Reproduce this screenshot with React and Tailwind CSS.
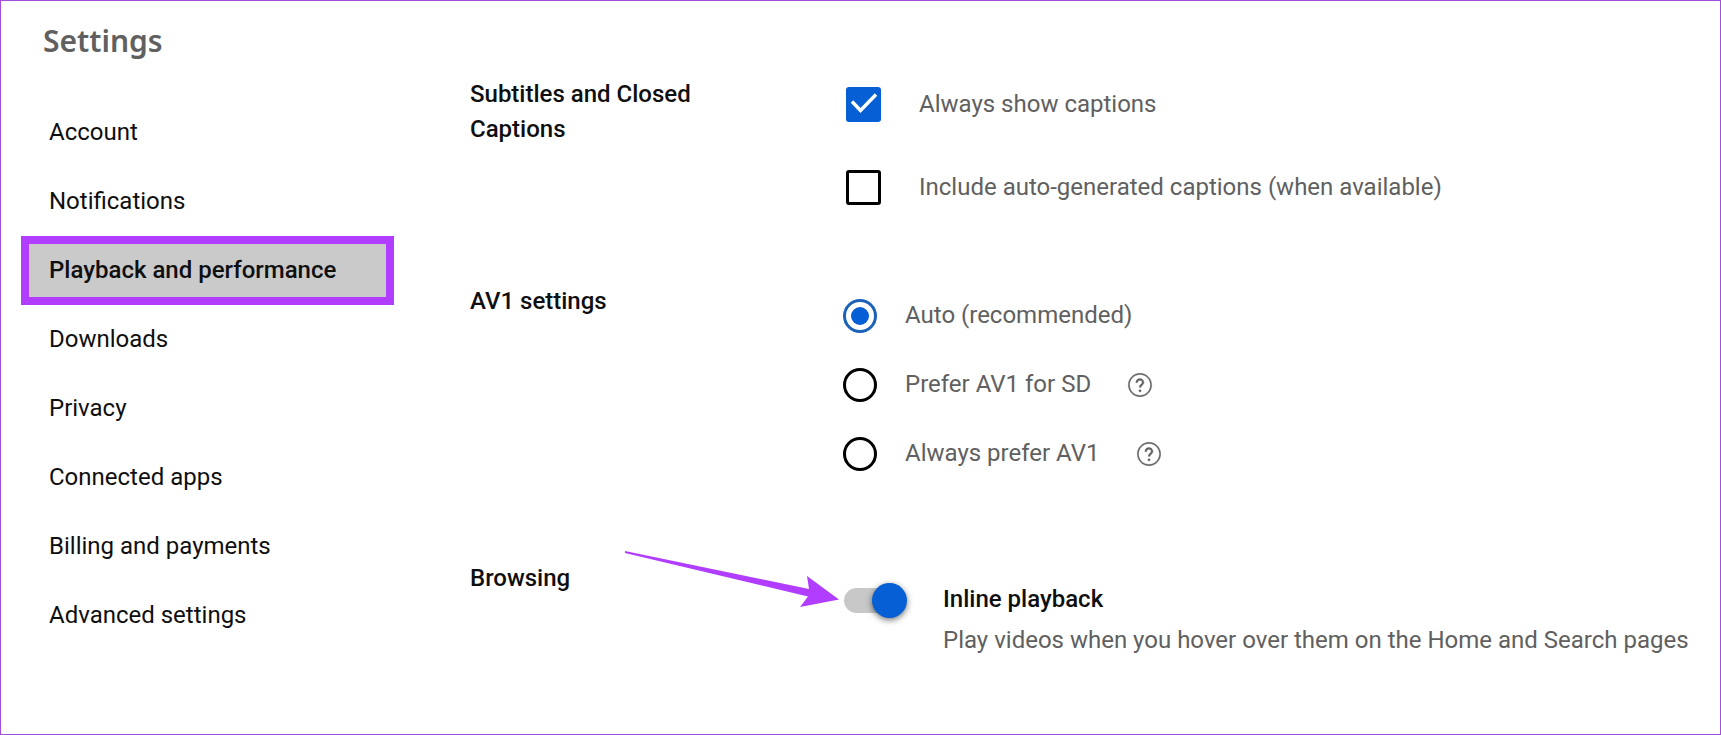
import React, { useState } from 'react';

const navItems = [
  'Account',
  'Notifications',
  'Playback and performance',
  'Downloads',
  'Privacy',
  'Connected apps',
  'Billing and payments',
  'Advanced settings',
];

const av1Options = [
  { id: 'auto', label: 'Auto (recommended)', help: false },
  { id: 'sd', label: 'Prefer AV1 for SD', help: true },
  { id: 'always', label: 'Always prefer AV1', help: true },
];

const HelpIcon = () => (
  <svg viewBox="0 0 24 24" className="h-7 w-7" fill="currentColor" stroke="currentColor" strokeWidth="0.4" aria-hidden="true">
    <path d="M15.36 9.96c0 1.09-.67 1.67-1.31 2.24-.53.47-1.03.9-1.16 1.6l-.04.2h-1.52l.04-.34c.13-1.17.93-1.86 1.57-2.42.58-.5.96-.84.96-1.28 0-1.2-.84-1.96-1.96-1.96-1.12 0-1.96.76-1.96 1.96H8.48C8.48 7.84 9.9 6.5 11.94 6.5s3.42 1.42 3.42 3.46zM12 18c.55 0 1-.45 1-1s-.45-1-1-1-1 .45-1 1 .45 1 1 1zm0-15c-4.96 0-9 4.04-9 9s4.04 9 9 9 9-4.04 9-9-4.04-9-9-9m0-1c5.52 0 10 4.48 10 10s-4.48 10-10 10S2 17.52 2 12 6.48 2 12 2z" />
  </svg>
);

const Checkbox = ({ label, checked, onChange }) => (
  <label className="flex cursor-pointer items-center gap-[38px] pl-[3px]">
    <span className="grid shrink-0">
      <input
        type="checkbox"
        checked={checked}
        onChange={onChange}
        className="col-start-1 row-start-1 h-[35px] w-[35px] cursor-pointer appearance-none rounded-[3px] border-3 border-black checked:border-[#065fd4] checked:bg-[#065fd4]"
      />
      {checked && (
        <svg viewBox="0 0 35 35" className="pointer-events-none col-start-1 row-start-1 h-[35px] w-[35px]" fill="none" stroke="white" strokeWidth="3.4">
          <path d="M6 14.5 L14.5 23.5 L30 7.5" />
        </svg>
      )}
    </span>
    <span>{label}</span>
  </label>
);

const Section = ({ title, children, className }) => (
  <section className={`grid grid-cols-[240px_1fr] gap-x-[133px] ${className}`}>
    <h2 className="font-medium text-[#0f0f0f]">{title}</h2>
    {children}
  </section>
);

const App = () => {
  const [always, setAlways] = useState(true);
  const [auto, setAuto] = useState(false);
  const [av1, setAv1] = useState('auto');
  const [inline, setInline] = useState(true);

  return (
    <div className="flex min-h-screen border border-[#a34fdc] bg-white font-[Roboto,sans-serif] text-2xl leading-[35px] text-[#606060]">
      <aside className="ml-5 w-[373px] shrink-0 pt-5">
        <h1 className="mb-[38px] pl-[22px] font-['Noto_Sans',sans-serif] text-[30px] font-semibold leading-[39px]">
          Settings
        </h1>
        <nav>
          {navItems.map((item) => (
            <a
              key={item}
              href="#"
              className={
                item === 'Playback and performance'
                  ? 'flex h-[69px] items-center border-8 border-[#b03dff] bg-[#cacaca] pl-5 font-medium text-[#0f0f0f]'
                  : 'flex h-[69px] items-center pl-7 text-[#0f0f0f]'
              }
            >
              {item}
            </a>
          ))}
        </nav>
      </aside>

      <main className="ml-[76px] flex-1 pt-[76px]">
        <Section title="Subtitles and Closed Captions" className="pb-[79px]">
          <div className="flex flex-col gap-12 pt-[10px]">
            <Checkbox label="Always show captions" checked={always} onChange={() => setAlways(!always)} />
            <Checkbox
              label="Include auto-generated captions (when available)"
              checked={auto}
              onChange={() => setAuto(!auto)}
            />
          </div>
        </Section>

        <Section title="AV1 settings" className="pb-[90px]">
          <div className="flex flex-col gap-[34px] pt-[14px]" role="radiogroup" aria-label="AV1 settings">
            {av1Options.map((option) => (
              <div key={option.id} className="flex items-center gap-[35px]">
                <label className="flex cursor-pointer items-center gap-7">
                  <input
                    type="radio"
                    name="av1"
                    checked={av1 === option.id}
                    onChange={() => setAv1(option.id)}
                    className="grid h-[34px] w-[34px] shrink-0 cursor-pointer appearance-none place-content-center rounded-full border-3 border-black before:h-[18px] before:w-[18px] before:rounded-full checked:border-[#1c62b9] checked:before:bg-[#065fd4]"
                  />
                  <span>{option.label}</span>
                </label>
                {option.help && (
                  <button type="button" aria-label={`About ${option.label}`} className="cursor-pointer">
                    <HelpIcon />
                  </button>
                )}
              </div>
            ))}
          </div>
        </Section>

        <Section title="Browsing" className="relative">
          <label className="flex cursor-pointer gap-[42px] pt-[21px]">
            <input
              type="checkbox"
              role="switch"
              checked={inline}
              onChange={() => setInline(!inline)}
              className="relative mt-[6px] ml-px h-[25px] w-[57px] shrink-0 cursor-pointer appearance-none rounded-full bg-[#c8c8c8] before:absolute before:-top-[5px] before:left-0 before:h-[35px] before:w-[35px] before:rounded-full before:bg-white before:shadow-[0_2px_6px_rgba(0,0,0,0.55)] checked:before:left-7 checked:before:bg-[#065fd4]"
            />
            <span className="flex flex-col gap-[6px]">
              <span className="font-medium text-[#0f0f0f]">Inline playback</span>
              <span>Play videos when you hover over them on the Home and Search pages</span>
            </span>
          </label>
          {/* arrow pointing at the switch */}
          <svg viewBox="0 0 214 58" className="pointer-events-none absolute -top-[10px] left-[155px] h-[58px] w-[214px]" fill="#b03dff" aria-hidden="true">
            <path d="M0 0 L184 38 L182 25 L214 48.5 L175 56 L183 45.5 L0 2 Z" />
          </svg>
        </Section>
      </main>
    </div>
  );
};

export default App;
